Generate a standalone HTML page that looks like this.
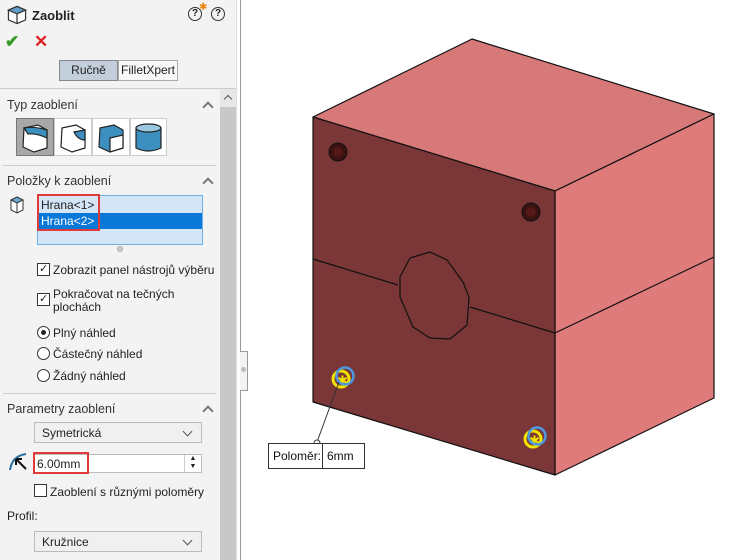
<!DOCTYPE html>
<html><head><meta charset="utf-8"><style>
*{margin:0;padding:0;box-sizing:border-box}
body{width:750px;height:560px;background:#fff;font-family:"Liberation Sans",sans-serif;font-size:12px;color:#222;position:relative;overflow:hidden}
.abs{position:absolute}
#panel{left:0;top:0;width:237px;height:560px;background:#f3f3f3}
.hd{font-size:12.5px;color:#333}
.chev{width:8px;height:8px;border-left:2px solid #777;border-top:2px solid #777;transform:rotate(45deg)}
.cb{width:13px;height:13px;border:1px solid #333;background:#fff}
.rb{width:13px;height:13px;border:1px solid #333;border-radius:50%;background:#fff}
.dd{border:1px solid #bbb;background:#f0f0f0;height:21px;padding:3px 7px;font-size:12px}
.dd:after{content:"";position:absolute;right:10px;top:5px;width:6px;height:6px;border-right:1px solid #555;border-bottom:1px solid #555;transform:rotate(45deg)}
</style></head><body>
<div id="panel" class="abs">
<svg class="abs" style="left:6px;top:4px" width="22" height="22" viewBox="0 0 18 18"><path d="M2 5 L9 2 L16 5 L16 13 L9 16 L2 13Z" fill="#fff" stroke="#333"/><path d="M2 5 L9 8 L16 5 L9 2Z" fill="#5fa0c8" stroke="#333"/><path d="M9 8V16" stroke="#333"/></svg>
<div class="abs" style="left:32px;top:8px;font-weight:bold;font-size:13px">Zaoblit</div>
<div class="abs" style="left:188px;top:7px;width:14px;height:14px;border:1.5px solid #333;border-radius:50%;font-size:10px;font-weight:bold;text-align:center;line-height:12px">?</div>
<div class="abs" style="left:199px;top:2px;color:#e8860c;font-size:10px">✱</div>
<div class="abs" style="left:211px;top:7px;width:14px;height:14px;border:1.5px solid #333;border-radius:50%;font-size:10px;font-weight:bold;text-align:center;line-height:12px">?</div>
<div class="abs" style="left:5px;top:32px;color:#3a9a2a;font-size:17px;font-weight:bold">✔</div>
<div class="abs" style="left:34px;top:32px;color:#d22;font-size:17px;font-weight:bold">✕</div>
<div class="abs" style="left:59px;top:60px;width:59px;height:21px;background:#c3cedb;border:1px solid #888;text-align:center;line-height:19px">Ručně</div>
<div class="abs" style="left:118px;top:60px;width:60px;height:21px;background:#f8f8f8;border:1px solid #aaa;text-align:center;line-height:19px">FilletXpert</div>
<div class="abs" style="left:0;top:88px;width:237px;height:1px;background:#ccc"></div>
<div class="abs" style="left:220px;top:89px;width:16px;height:471px;background:#e8e8e8"></div>
<div class="abs" style="left:220px;top:107px;width:16px;height:453px;background:#c8c8c8"></div>
<div class="abs chev" style="left:225px;top:96px;width:6px;height:6px;border-width:1.5px;border-color:#555"></div>
<div class="abs hd" style="left:7px;top:98px">Typ zaoblení</div>
<div class="abs chev" style="left:204px;top:103px"></div>
<div class="abs" style="left:16px;top:118px;width:38px;height:38px;background:#a8a8a8;border:1px solid #777"></div>
<div class="abs" style="left:54px;top:118px;width:38px;height:38px;background:#fff;border:1px solid #ccc"></div>
<div class="abs" style="left:92px;top:118px;width:38px;height:38px;background:#fff;border:1px solid #ccc"></div>
<div class="abs" style="left:130px;top:118px;width:37px;height:38px;background:#fff;border:1px solid #ccc"></div>
<svg class="abs" style="left:16px;top:118px" width="152" height="38">
<g stroke="#222" stroke-width="1.2"><path d="M8 10 L22 7 L31 12 L31 30 L18 34 L7 29Z" fill="#fff"/><path d="M8 10 Q18 8 31 12 L31 20 Q20 15 12 16Z" fill="#3d8fbf"/></g>
<g transform="translate(38,0)" stroke="#222" stroke-width="1.2"><path d="M8 10 L22 7 L31 12 L31 30 L18 34 L7 29Z" fill="#fff"/><path d="M20 14 L31 12 L31 22 Q24 22 20 14Z" fill="#3d8fbf"/></g>
<g transform="translate(76,0)" stroke="#222" stroke-width="1.2"><path d="M8 10 L22 7 L31 12 L31 30 L18 34 L7 29Z" fill="#3d8fbf"/><path d="M18 20 L31 17 L31 30 L18 34Z" fill="#fff"/></g>
<g transform="translate(114,0)" stroke="#222" stroke-width="1.2"><path d="M6 10 L6 30 Q18 36 31 30 L31 10Z" fill="#3d8fbf"/><ellipse cx="18.5" cy="10" rx="12.5" ry="4" fill="#9cc8e2"/></g>
</svg>
<div class="abs" style="left:3px;top:165px;width:213px;height:1px;background:#ccc"></div>
<div class="abs hd" style="left:7px;top:174px">Položky k zaoblení</div>
<div class="abs chev" style="left:204px;top:179px"></div>
<svg class="abs" style="left:9px;top:196px" width="18" height="20"><path d="M2 4 L8 1 L14 4 L14 14 L8 17 L2 14Z" fill="#fff" stroke="#333"/><path d="M2 4 L8 7 L14 4 L8 1Z" fill="#6aaad4" stroke="#333"/><path d="M8 7V17" stroke="#333"/></svg>
<div class="abs" style="left:37px;top:195px;width:166px;height:50px;background:#d4e5f7;border:1px solid #6fb0e6"></div>
<div class="abs" style="left:38px;top:213px;width:164px;height:16px;background:#0a78d7"></div>
<div class="abs" style="left:41px;top:198px">Hrana&lt;1&gt;</div>
<div class="abs" style="left:41px;top:214px;color:#fff">Hrana&lt;2&gt;</div>
<div class="abs" style="left:37px;top:194px;width:63px;height:37px;border:2px solid #e03a3a"></div>
<div class="abs" style="left:117px;top:246px;width:6px;height:6px;border-radius:50%;background:#ccc;border:1px solid #aaa"></div>
<div class="abs cb" style="left:37px;top:263px"></div><div class="abs" style="left:39px;top:262px;font-size:11px">✓</div>
<div class="abs" style="left:53px;top:263px">Zobrazit panel nástrojů výběru</div>
<div class="abs cb" style="left:37px;top:293px"></div><div class="abs" style="left:39px;top:292px;font-size:11px">✓</div>
<div class="abs" style="left:53px;top:288px;line-height:13px">Pokračovat na tečných<br>plochách</div>
<div class="abs rb" style="left:37px;top:326px"></div><div class="abs" style="left:41px;top:330px;width:5px;height:5px;border-radius:50%;background:#222"></div>
<div class="abs" style="left:53px;top:326px">Plný náhled</div>
<div class="abs rb" style="left:37px;top:347px"></div>
<div class="abs" style="left:53px;top:347px">Částečný náhled</div>
<div class="abs rb" style="left:37px;top:369px"></div>
<div class="abs" style="left:53px;top:369px">Žádný náhled</div>
<div class="abs" style="left:3px;top:393px;width:213px;height:1px;background:#ccc"></div>
<div class="abs hd" style="left:7px;top:402px">Parametry zaoblení</div>
<div class="abs chev" style="left:204px;top:407px"></div>
<div class="abs dd" style="left:34px;top:422px;width:168px">Symetrická</div>
<svg class="abs" style="left:8px;top:451px" width="24" height="20"><path d="M2 19 Q4 5 18 3" fill="none" stroke="#2a6fa0" stroke-width="2"/><path d="M18 18 L8 8 M8 8 L8 14 M8 8 L14 8" stroke="#111" stroke-width="2" fill="none"/></svg>
<div class="abs" style="left:34px;top:454px;width:168px;height:19px;background:#fff;border:1px solid #bbb"></div>
<div class="abs" style="left:33px;top:452px;width:56px;height:22px;border:2px solid #e03a3a"></div>
<div class="abs" style="left:37px;top:457px">6.00mm</div>
<div class="abs" style="left:184px;top:455px;width:17px;height:17px;border-left:1px solid #ccc;font-size:7px;line-height:8px;text-align:center;color:#222">▲<br>▼</div>
<div class="abs cb" style="left:34px;top:484px"></div>
<div class="abs" style="left:50px;top:485px">Zaoblení s různými poloměry</div>
<div class="abs" style="left:7px;top:509px">Profil:</div>
<div class="abs dd" style="left:34px;top:531px;width:168px">Kružnice</div>
</div>
<div class="abs" style="left:236px;top:0;width:1px;height:560px;background:#ddd"></div>
<div class="abs" style="left:240px;top:0;width:1px;height:560px;background:#999"></div>
<div class="abs" style="left:240px;top:351px;width:8px;height:40px;background:#f3f3f3;border:1px solid #999;border-left:none"></div>
<div class="abs" style="left:241px;top:367px;width:5px;height:5px;border-radius:50%;background:#bbb"></div>
<svg class="abs" style="left:0;top:0" width="750" height="560">
<g stroke="#111" stroke-width="1.2" stroke-linejoin="round">
<path d="M472 39 L714 114 L555 191 L313 117Z" fill="#d77978"/>
<path d="M555 191 L714 114 L714 398 L555 475Z" fill="#e07b7b"/>
<path d="M313 117 L555 191 L555 475 L313 402Z" fill="#7b3637"/>
<path d="M313 259 L398 285 M470 307 L555 333 L714 257" fill="none"/>
<path d="M410 258 L430 252 L447 260 L463 282 L469 297 L467 325 L450 339 L430 338 L413 327 L400 297 L400 277Z" fill="#7b3637"/>
</g>
<g><circle cx="338" cy="152" r="9" fill="#3a1212" stroke="#111"/><circle cx="338" cy="152" r="5" fill="#551818"/>
<circle cx="531" cy="212" r="9" fill="#3a1212" stroke="#111"/><circle cx="531" cy="212" r="5" fill="#551818"/></g>
<g fill="none" stroke-width="3"><circle cx="341" cy="379" r="8" stroke="#f2e400"/><text x="337" y="385" font-size="13" fill="#f2e400" font-family="DejaVu Sans" stroke="none">✱</text><circle cx="345" cy="376" r="8.5" stroke="#4a9be0" stroke-width="2.5"/>
<circle cx="533" cy="439" r="8" stroke="#f2e400"/><text x="529" y="445" font-size="13" fill="#f2e400" font-family="DejaVu Sans" stroke="none">✱</text><circle cx="537" cy="436" r="8.5" stroke="#4a9be0" stroke-width="2.5"/></g>
<path d="M339 382 L317 442" stroke="#333" fill="none"/>
<circle cx="317" cy="443" r="3" fill="#fff" stroke="#333"/>
<rect x="268.5" y="443.5" width="96" height="25" fill="#fff" stroke="#333"/>
<line x1="322.5" y1="443" x2="322.5" y2="468" stroke="#333"/>
<text x="273" y="460" font-family="Liberation Sans" font-size="12" fill="#111">Poloměr:</text>
<text x="327" y="460" font-family="Liberation Sans" font-size="12" fill="#111">6mm</text>
</svg>
</body></html>
